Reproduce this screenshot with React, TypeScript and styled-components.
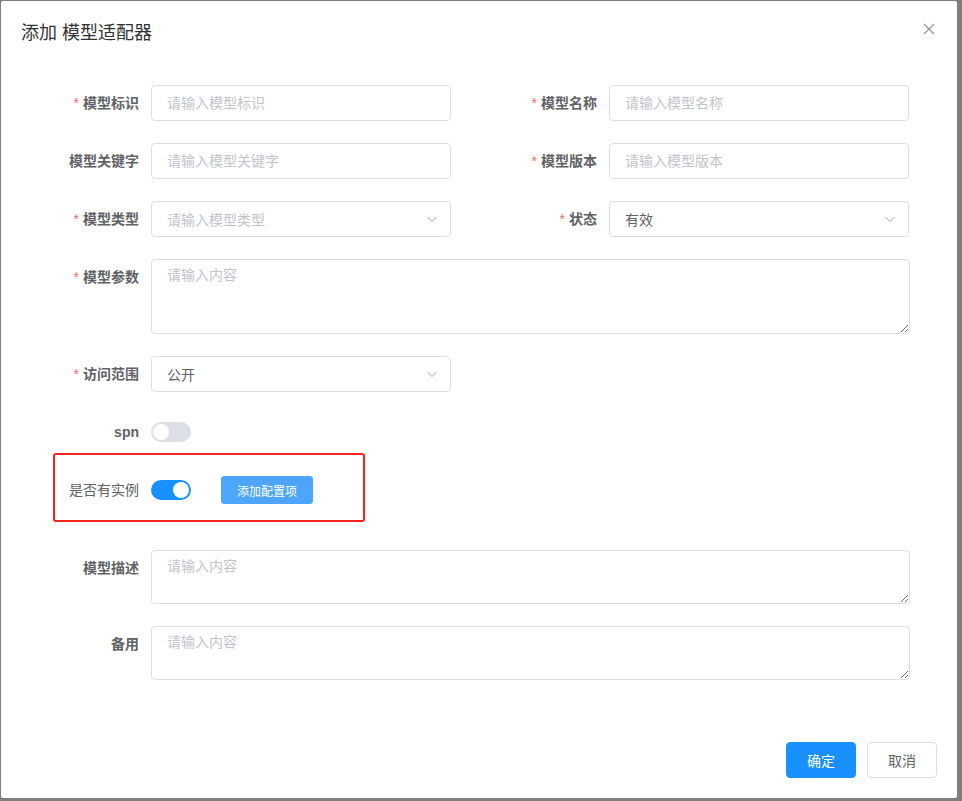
import React from 'react'
import styled, { createGlobalStyle } from 'styled-components'

const GlobalStyle = createGlobalStyle`
  html, body {
    margin: 0;
    padding: 0;
    background: #7f7f7f;
  }

  body {
    font-family: "Liberation Sans", "Noto Sans CJK SC", sans-serif;
    -webkit-font-smoothing: antialiased;
  }

  * {
    box-sizing: border-box;
  }
`

const Backdrop = styled.div`
  width: 962px;
  height: 801px;
  padding: 1px 0 0 1px;
  background: #7f7f7f;
`

const Dialog = styled.div`
  display: flex;
  flex-direction: column;
  width: 956px;
  height: 797px;
  background: #fff;
  border-radius: 2px;
`

const Header = styled.div`
  display: flex;
  align-items: flex-start;
  justify-content: space-between;
  padding: 20px 20px 10px;
`

const Title = styled.span`
  font-size: 18px;
  line-height: 24px;
  color: #303133;
`

const CloseButton = styled.button`
  display: flex;
  align-items: center;
  justify-content: center;
  width: 16px;
  height: 16px;
  padding: 0;
  border: none;
  background: none;
  cursor: pointer;
`

const Body = styled.div`
  flex: 1;
  padding: 30px 20px 0 50px;
`

const FormGrid = styled.div`
  display: grid;
  grid-template-columns: 458px 401px;
  row-gap: 22px;
`

const FormItem = styled.div<{ $full?: boolean; $extra?: number }>`
  position: relative;
  display: flex;
  align-items: flex-start;
  grid-column: ${(p) => (p.$full ? '1 / -1' : 'auto')};
  margin-bottom: ${(p) => p.$extra ?? 0}px;
`

const Label = styled.label<{ $light?: boolean }>`
  flex: 0 0 100px;
  padding-right: 12px;
  text-align: right;
  font-size: 14px;
  line-height: 36px;
  font-weight: ${(p) => (p.$light ? 400 : 700)};
  color: #606266;
  white-space: nowrap;

  &::before {
    content: ${(p) => ((p as any).$required ? '"*"' : 'none')};
  }
`

const Star = styled.span`
  margin-right: 4px;
  color: #f56c6c;
  font-weight: 400;
`

const Control = styled.div<{ $grow?: boolean }>`
  display: flex;
  align-items: center;
  gap: 30px;
  width: ${(p) => (p.$grow ? 'auto' : '300px')};
  flex: ${(p) => (p.$grow ? 1 : 'none')};
  min-height: 36px;
`

const TextInput = styled.input`
  width: 100%;
  height: 36px;
  padding: 0 15px;
  border: 1px solid #dcdfe6;
  border-radius: 4px;
  font-family: inherit;
  font-size: 14px;
  color: #606266;
  outline: none;

  &::placeholder {
    color: #c0c4cc;
  }
`

const SelectBox = styled.div<{ $empty?: boolean }>`
  display: flex;
  align-items: center;
  justify-content: space-between;
  width: 100%;
  height: 36px;
  padding: 0 12px 0 15px;
  border: 1px solid #dcdfe6;
  border-radius: 4px;
  font-size: 14px;
  color: ${(p) => (p.$empty ? '#c0c4cc' : '#606266')};
`

const TextArea = styled.textarea<{ $height: number }>`
  display: block;
  width: 100%;
  height: ${(p) => p.$height}px;
  padding: 5px 15px;
  border: 1px solid #dcdfe6;
  border-radius: 4px;
  font-family: inherit;
  font-size: 14px;
  line-height: 1.5;
  color: #606266;
  resize: vertical;
  outline: none;

  &::placeholder {
    color: #c0c4cc;
  }
`

const SwitchTrack = styled.span<{ $on?: boolean }>`
  position: relative;
  display: inline-block;
  width: 40px;
  height: 20px;
  border-radius: 10px;
  background: ${(p) => (p.$on ? '#1890ff' : '#dcdfe6')};

  &::after {
    content: '';
    position: absolute;
    top: 2px;
    left: ${(p) => (p.$on ? '22px' : '2px')};
    width: 16px;
    height: 16px;
    border-radius: 50%;
    background: #fff;
  }
`

const Button = styled.button<{ $primary?: boolean; $small?: boolean }>`
  height: ${(p) => (p.$small ? 28 : 36)}px;
  padding: ${(p) => (p.$small ? '0 15px' : '0 20px')};
  border: 1px solid ${(p) => (p.$primary ? '#1890ff' : '#dcdfe6')};
  border-radius: ${(p) => (p.$small ? 3 : 4)}px;
  background: ${(p) => (p.$primary ? '#1890ff' : '#fff')};
  color: ${(p) => (p.$primary ? '#fff' : '#606266')};
  font-family: inherit;
  font-size: ${(p) => (p.$small ? 12 : 14)}px;
  cursor: pointer;
`

const LightButton = styled(Button)`
  border-color: #4ea6fc;
  background: #4ea6fc;
`

const Annotation = styled.div`
  position: absolute;
  top: -19px;
  left: 2px;
  width: 312px;
  height: 69px;
  border: 2px solid #f5231d;
  border-radius: 3px;
  pointer-events: none;
`

const Footer = styled.div`
  display: flex;
  justify-content: flex-end;
  gap: 11px;
  padding: 10px 20px 20px;
`

const Chevron = () => (
  <svg width="12" height="12" viewBox="0 0 12 12" fill="none">
    <path d="M1.5 4 L6 8.5 L10.5 4" stroke="#c0c4cc" strokeWidth="1.1" />
  </svg>
)

const CloseIcon = () => (
  <svg width="12" height="12" viewBox="0 0 12 12" fill="none">
    <path d="M1 1 L11 11 M11 1 L1 11" stroke="#909399" strokeWidth="1.2" />
  </svg>
)

const FieldLabel = ({ text, required, light }: { text: string; required?: boolean; light?: boolean }) => (
  <Label $light={light}>
    {required && <Star>*</Star>}
    {text}
  </Label>
)

export default function App() {
  return (
    <>
      <GlobalStyle />
      <Backdrop>
        <Dialog>
          <Header>
            <Title>添加 模型适配器</Title>
            <CloseButton aria-label="close">
              <CloseIcon />
            </CloseButton>
          </Header>

          <Body>
            <FormGrid>
              <FormItem>
                <FieldLabel text="模型标识" required />
                <Control>
                  <TextInput placeholder="请输入模型标识" />
                </Control>
              </FormItem>
              <FormItem>
                <FieldLabel text="模型名称" required />
                <Control>
                  <TextInput placeholder="请输入模型名称" />
                </Control>
              </FormItem>

              <FormItem>
                <FieldLabel text="模型关键字" />
                <Control>
                  <TextInput placeholder="请输入模型关键字" />
                </Control>
              </FormItem>
              <FormItem>
                <FieldLabel text="模型版本" required />
                <Control>
                  <TextInput placeholder="请输入模型版本" />
                </Control>
              </FormItem>

              <FormItem>
                <FieldLabel text="模型类型" required />
                <Control>
                  <SelectBox $empty>
                    请输入模型类型
                    <Chevron />
                  </SelectBox>
                </Control>
              </FormItem>
              <FormItem>
                <FieldLabel text="状态" required />
                <Control>
                  <SelectBox>
                    有效
                    <Chevron />
                  </SelectBox>
                </Control>
              </FormItem>

              <FormItem $full>
                <FieldLabel text="模型参数" required />
                <Control $grow>
                  <TextArea $height={75} placeholder="请输入内容" />
                </Control>
              </FormItem>

              <FormItem $full>
                <FieldLabel text="访问范围" required />
                <Control>
                  <SelectBox>
                    公开
                    <Chevron />
                  </SelectBox>
                </Control>
              </FormItem>

              <FormItem $full>
                <FieldLabel text="spn" />
                <Control>
                  <SwitchTrack />
                </Control>
              </FormItem>

              <FormItem $full $extra={20}>
                <FieldLabel text="是否有实例" light />
                <Control>
                  <SwitchTrack $on />
                  <LightButton $primary $small>添加配置项</LightButton>
                </Control>
                <Annotation />
              </FormItem>

              <FormItem $full>
                <FieldLabel text="模型描述" />
                <Control $grow>
                  <TextArea $height={54} placeholder="请输入内容" />
                </Control>
              </FormItem>

              <FormItem $full>
                <FieldLabel text="备用" />
                <Control $grow>
                  <TextArea $height={54} placeholder="请输入内容" />
                </Control>
              </FormItem>
            </FormGrid>
          </Body>

          <Footer>
            <Button $primary>确定</Button>
            <Button>取消</Button>
          </Footer>
        </Dialog>
      </Backdrop>
    </>
  )
}
